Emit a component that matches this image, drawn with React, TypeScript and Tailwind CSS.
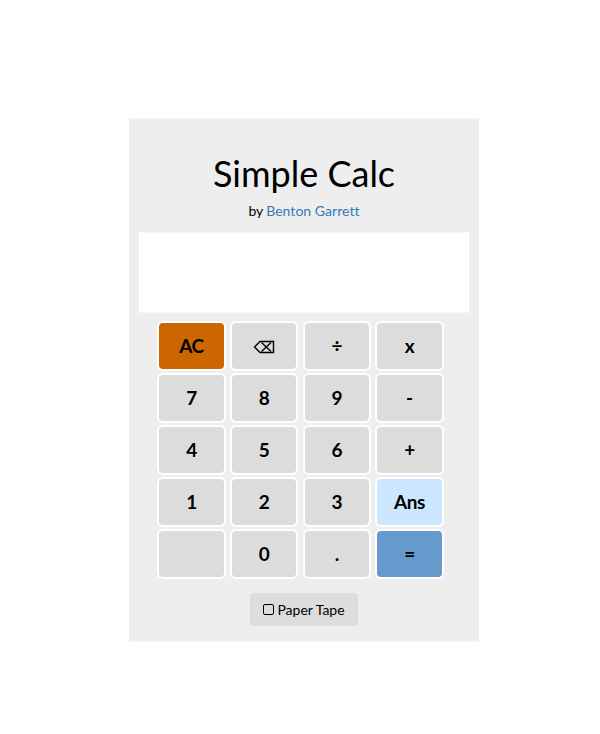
const keys = ['AC', '⌫', '÷', 'x', '7', '8', '9', '-', '4', '5', '6', '+', '1', '2', '3', 'Ans', '', '0', '.', '='];

function color(k: string) {
  if (k === 'AC') return 'bg-[#cc6600]';
  if (k === 'Ans') return 'bg-[#cce6ff]';
  if (k === '=') return 'bg-[#6699cc]';
  return 'bg-[#dcdcdc]';
}

function Backspace() {
  return (
    <svg className="mx-auto mt-px block" width="22" height="14" viewBox="0 0 22 14" fill="none" stroke="black">
      <path d="M7 1.5H20.5V12.5H7L1.5 7Z" strokeWidth="1.4" />
      <path d="M8.5 2.5L18 11.5M18 2.5L8.5 11.5" strokeWidth="1.4" />
    </svg>
  );
}

export default function App() {
  return (
    <div className="h-[734px] bg-white pt-[118px] pl-[129px] font-['Lato','DejaVu_Sans',sans-serif] text-black [font-variant-ligatures:none]">
      <main className="h-[524px] w-[350px] border-y border-[#f7f7f7] bg-[#eeeeee] px-[10px] pt-[34px]">
        <h1 className="h-[40px] text-center text-[36px] leading-[40px]">Simple Calc</h1>
        <p className="mt-[8px] h-[20px] text-center text-[14px] leading-[20px]">
          by <a className="-ml-[0.4px] tracking-[0.04px] text-[#337ab7]">Benton Garrett</a>
        </p>
        <div className="mt-[11px] h-[81px] border-y border-[#f7f7f7] bg-white" />
        <div className="mt-[8px] ml-[18.3px] grid w-[286.4px] grid-cols-[68.4px_68.4px_68.4px_68.4px] justify-between gap-y-[2px]">
          {keys.map((k, i) => (
            <button key={i} className={`h-[50px] rounded-[6px] border-2 border-white text-[19px] font-bold tracking-[-0.4px] ${color(k)}`}>
              {k === '⌫' ? <Backspace /> : k}
            </button>
          ))}
        </div>
        <div className="mt-[14px] flex justify-center">
          <button className="flex h-[33px] w-[108px] items-center justify-center gap-[3px] rounded-[3px] bg-[#dddddd] text-[14px]">
            <span className="h-[11px] w-[11px] rounded-[2px] border border-black" />
            Paper Tape
          </button>
        </div>
      </main>
    </div>
  );
}
